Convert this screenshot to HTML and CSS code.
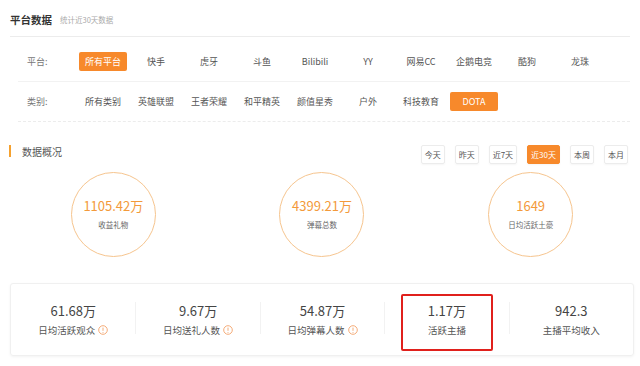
FILE: index.html
```html
<!DOCTYPE html>
<html>
<head>
<meta charset="UTF-8" />
<title>平台数据</title>
<link rel="stylesheet" href="styles.css">
</head>
<body>
<div class="page">
  <div class="page-head">
    <span class="page-title">平台数据</span>
    <span class="page-sub">统计近30天数据</span>
  </div>

  <div class="filters">
    <div class="filter-row">
      <span class="filter-label">平台:</span>
      <span class="filter-item active">所有平台</span>
      <span class="filter-item">快手</span>
      <span class="filter-item">虎牙</span>
      <span class="filter-item">斗鱼</span>
      <span class="filter-item">Bilibili</span>
      <span class="filter-item">YY</span>
      <span class="filter-item">网易CC</span>
      <span class="filter-item">企鹅电竞</span>
      <span class="filter-item">酷狗</span>
      <span class="filter-item">龙珠</span>
    </div>
    <div class="filter-row dashed">
      <span class="filter-label">类别:</span>
      <span class="filter-item">所有类别</span>
      <span class="filter-item">英雄联盟</span>
      <span class="filter-item">王者荣耀</span>
      <span class="filter-item">和平精英</span>
      <span class="filter-item">颜值星秀</span>
      <span class="filter-item">户外</span>
      <span class="filter-item">科技教育</span>
      <span class="filter-item active">DOTA</span>
    </div>
  </div>

  <div class="section-head">
    <div class="section-title"><i class="bar"></i>数据概况</div>
    <div class="ranges">
      <span class="range">今天</span>
      <span class="range">昨天</span>
      <span class="range">近7天</span>
      <span class="range active">近30天</span>
      <span class="range">本周</span>
      <span class="range">本月</span>
    </div>
  </div>

  <div class="rings">
    <div class="ring-cell"><div class="ring"><b>1105.42万</b><span>收益礼物</span></div></div>
    <div class="ring-cell"><div class="ring"><b>4399.21万</b><span>弹幕总数</span></div></div>
    <div class="ring-cell"><div class="ring"><b>1649</b><span>日均活跃土豪</span></div></div>
  </div>

  <div class="stats">
    <div class="stat">
      <div class="stat-value">61.68万</div>
      <div class="stat-label">日均活跃观众<svg class="tip" viewBox="0 0 10 10"><circle cx="5" cy="5" r="4.3"/><path d="M5 2.6v3.2M5 7v0.8"/></svg></div>
    </div>
    <div class="stat">
      <div class="stat-value">9.67万</div>
      <div class="stat-label">日均送礼人数<svg class="tip" viewBox="0 0 10 10"><circle cx="5" cy="5" r="4.3"/><path d="M5 2.6v3.2M5 7v0.8"/></svg></div>
    </div>
    <div class="stat">
      <div class="stat-value">54.87万</div>
      <div class="stat-label">日均弹幕人数<svg class="tip" viewBox="0 0 10 10"><circle cx="5" cy="5" r="4.3"/><path d="M5 2.6v3.2M5 7v0.8"/></svg></div>
    </div>
    <div class="stat marked">
      <div class="stat-value">1.17万</div>
      <div class="stat-label">活跃主播</div>
    </div>
    <div class="stat">
      <div class="stat-value">942.3</div>
      <div class="stat-label">主播平均收入</div>
    </div>
  </div>
</div>
</body>
</html>
```

FILE: styles.css
```css
* {
  box-sizing: border-box;
}
body {
  margin: 0;
  background: #fff;
  font-family: "Noto Sans CJK SC", "Liberation Sans", sans-serif;
  color: #555;
}
.page {
  width: 640px;
  height: 366px;
  overflow: hidden;
}
.page-head {
  margin: 0 10px;
  padding: 11px 0 9px;
  height: 37px;
  border-bottom: 1px solid #ececec;
  display: flex;
  align-items: center;
}
.page-title {
  font-size: 10.5px;
  font-weight: bold;
  color: #333;
}
.page-sub {
  font-size: 7.5px;
  color: #aaa;
  margin-left: 8px;
}

.filters {
  margin: 5px 10px 0 18px;
}
.filter-row {
  height: 40px;
  display: flex;
  align-items: center;
  border-bottom: 1px solid #f2f2f2;
}
.filter-row.dashed {
  border-bottom: 1px dashed #ececec;
}
.filter-label {
  width: 61px;
  padding-left: 9px;
  font-size: 9px;
  color: #777;
}
.filter-item {
  width: 48px;
  height: 19px;
  margin-right: 5px;
  border-radius: 2px;
  font-size: 9px;
  line-height: 19px;
  text-align: center;
  color: #555;
  white-space: nowrap;
}
.filter-item.active {
  background: #f7892b;
  color: #fff;
}

.section-head {
  margin-top: 21px;
  height: 20px;
  padding: 0 12px 0 9px;
  display: flex;
  justify-content: space-between;
  align-items: center;
}
.section-title {
  display: flex;
  align-items: center;
  font-size: 10px;
  color: #555;
  margin-top: -4px;
}
.bar {
  width: 2px;
  height: 12px;
  background: #f5a12f;
  margin-right: 11px;
}
.ranges {
  display: flex;
  gap: 10px;
  margin-top: 2px;
}
.range {
  height: 19px;
  padding: 0 3px;
  min-width: 24px;
  border: 1px solid #ececec;
  border-radius: 2px;
  font-size: 8px;
  line-height: 17px;
  text-align: center;
  color: #555;
  box-shadow: 0 1px 2px rgba(0, 0, 0, 0.04);
}
.range.active {
  background: #f7892b;
  border-color: #f7892b;
  color: #fff;
}

.rings {
  margin: 9px 5px 0 9px;
  display: grid;
  grid-template-columns: repeat(3, 1fr);
}
.ring-cell {
  display: flex;
  justify-content: center;
}
.ring {
  width: 85px;
  height: 85px;
  border: 1px solid #f6c58f;
  border-radius: 50%;
  display: flex;
  flex-direction: column;
  align-items: center;
  justify-content: center;
}
.ring b {
  font-weight: normal;
  font-size: 13px;
  line-height: 18px;
  color: #f39a3b;
  margin-top: -2px;
}
.ring span {
  font-size: 7.5px;
  line-height: 12px;
  margin-top: 4px;
  color: #666;
}

.stats {
  margin: 26px 6px 0 10px;
  height: 73px;
  padding: 18px 0 21px;
  border: 1px solid #f0f0f0;
  border-radius: 3px;
  box-shadow: 0 1px 3px rgba(0, 0, 0, 0.05);
  display: grid;
  grid-template-columns: repeat(5, 1fr);
}
.stat {
  position: relative;
  height: 32px;
  text-align: center;
}
.stat + .stat {
  border-left: 1px solid #f2f2f2;
}
.stat-value {
  font-size: 13px;
  line-height: 18px;
  color: #444;
}
.stat-label {
  margin-top: 3px;
  font-size: 9.5px;
  line-height: 14px;
  color: #555;
  display: flex;
  justify-content: center;
  align-items: center;
}
.tip {
  width: 10px;
  height: 10px;
  margin-left: 3px;
  fill: none;
  stroke: #f3a36a;
  stroke-width: 0.9;
}
.marked::after {
  content: "";
  position: absolute;
  left: 16px;
  right: 16px;
  top: -8px;
  bottom: -17px;
  border: 2px solid #e0201c;
  border-radius: 2px;
}
```
